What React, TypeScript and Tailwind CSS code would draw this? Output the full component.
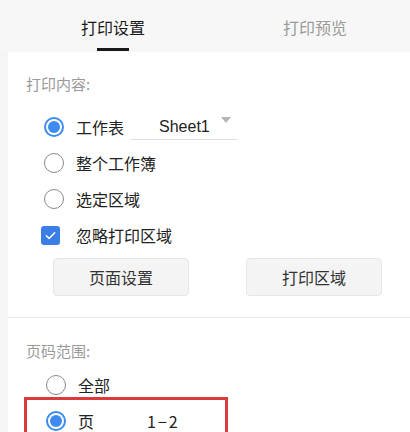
import React from "react";

const cjk = { fontFamily: '"Noto Sans CJK SC", "Noto Sans", sans-serif' };

function Radio({ checked }: { checked?: boolean }) {
  if (checked) {
    return (
      <span className="flex h-[20px] w-[20px] items-center justify-center rounded-full border-2 border-[#3d8bf0] bg-white">
        <span className="h-[12px] w-[12px] rounded-full bg-[#3d8bf0]" />
      </span>
    );
  }
  return <span className="block h-[20px] w-[20px] rounded-full border-[1.5px] border-[#8a8a8a] bg-white" />;
}

function Option({ checked, label, children }: { checked?: boolean; label: string; children?: React.ReactNode }) {
  return (
    <div className="flex h-9 items-center">
      <div className="w-[32px]">
        <Radio checked={checked} />
      </div>
      <span className="text-[16px] text-[#222]">{label}</span>
      {children}
    </div>
  );
}

export default function App() {
  return (
    <div className="h-[432px] w-[410px] overflow-hidden bg-[#f5f5f5]" style={cjk}>
      {/* tabs */}
      <div className="flex h-[52px] bg-[#f7f7f7]">
        <div className="relative flex w-[226px] items-center justify-center pt-[2px]">
          <span className="text-[16px] text-[#1a1a1a]">打印设置</span>
          <span className="absolute bottom-[1px] left-[97px] h-[3px] w-[32px] bg-[#1a1a1a]" />
        </div>
        <div className="flex flex-1 items-center justify-center pr-[6px] pt-[2px]">
          <span className="text-[16px] text-[#9a9a9a]">打印预览</span>
        </div>
      </div>

      <div className="ml-2 bg-white">
        {/* print content */}
        <div className="h-[266px] border-b border-[#ececec] pl-[18px]">
          <div className="pt-[21px] text-[15px] leading-[22px] text-[#9a9a9a]">打印内容:</div>
          <div className="mt-[14px] pl-[18px]">
            <Option checked label="工作表">
              <div className="relative ml-[7px] flex h-[26px] w-[106px] items-center border-b border-[#dedede] pl-[28px]">
                <span className="text-[16px] text-[#222]" style={{ fontFamily: '"Liberation Sans", Arial, sans-serif' }}>
                  Sheet1
                </span>
                <span className="absolute right-[6px] top-[3px] h-0 w-0 border-x-[5px] border-t-[6px] border-x-transparent border-t-[#b5b5b5]" />
              </div>
            </Option>
            <Option label="整个工作簿" />
            <Option label="选定区域" />
            <div className="flex h-9 items-center">
              <div className="-ml-[3px] w-[35px]">
                <span className="flex h-[19px] w-[19px] items-center justify-center rounded-[3px] bg-[#3b7fe6]">
                  <svg width="13" height="13" viewBox="0 0 14 14" fill="none">
                    <path d="M2.5 7.2l3 3 6-6.2" stroke="#fff" strokeWidth="1.6" strokeLinecap="round" strokeLinejoin="round" />
                  </svg>
                </span>
              </div>
              <span className="text-[16px] text-[#222]">忽略打印区域</span>
            </div>
          </div>
          <div className="mt-[5px] flex gap-[57px] pl-[27px]">
            <button className="h-[38px] w-[136px] rounded-[4px] border border-[#e6e6e6] bg-[#f4f4f4] text-[16px] text-[#333]">
              页面设置
            </button>
            <button className="h-[38px] w-[136px] rounded-[4px] border border-[#e6e6e6] bg-[#f4f4f4] text-[16px] text-[#333]">
              打印区域
            </button>
          </div>
        </div>

        {/* page range */}
        <div className="h-[200px] pl-[16px]">
          <div className="pl-[2px] pt-[22px] text-[15px] leading-[22px] text-[#9a9a9a]">页码范围:</div>
          <div className="mt-[5px] pl-[22px]">
            <Option label="全部" />
          </div>
          <div className="mt-[-6px] w-[204px] border-[3px] border-[#dc3a3d] pl-[19px] pt-[3px]">
            <div className="flex h-9 items-center">
              <div className="w-[32px]">
                <Radio checked />
              </div>
              <span className="w-[69px] text-[16px] text-[#222]">页</span>
              <span className="text-[16px] tracking-[2px] text-[#222]">1−2</span>
            </div>
          </div>
        </div>
      </div>
    </div>
  );
}
